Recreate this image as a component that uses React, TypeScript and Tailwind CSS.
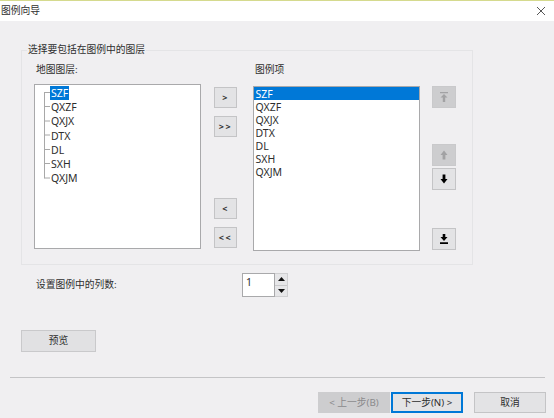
const layers = ['SZF', 'QXZF', 'QXJX', 'DTX', 'DL', 'SXH', 'QXJM']

const FONT = 'font-["Noto_Sans","Noto_Sans_CJK_SC",sans-serif]'

function MoveButton({ label, className = '' }: { label: string; className?: string }) {
  return (
    <button className={`w-[23px] h-[21px] border border-[#c4c4c6] bg-[#e3e3e5] flex items-center justify-center text-[9px] font-bold tracking-[1.5px] text-[#333] ${className}`}>
      {label}
    </button>
  )
}

function OrderButton({ d, disabled = false, className = '' }: { d: string; disabled?: boolean; className?: string }) {
  return (
    <button className={`w-[24px] h-[22px] border flex items-center justify-center ${disabled ? 'bg-[#cdcdcf] border-[#c9c9cb]' : 'bg-[#e3e3e5] border-[#c4c4c6]'} ${className}`}>
      <svg width="8" height="10" viewBox="0 0 8 10" className={disabled ? 'text-[#a2a2a4]' : 'text-black'}>
        <path d={d} fill="currentColor" />
      </svg>
    </button>
  )
}

function WizardButton({ children, className = '' }: { children: React.ReactNode; className?: string }) {
  return (
    <button className={`w-[72px] h-[21px] border flex items-center justify-center text-[9.75px] ${className}`}>
      {children}
    </button>
  )
}

export default function App() {
  return (
    <div className={`w-[554px] h-[418px] overflow-hidden flex flex-col bg-[#f0eff1] text-[10.5px] leading-[14px] text-[#2e2e2e] ${FONT}`}>
      {/* title bar */}
      <div className="h-[21px] shrink-0 bg-white border-t border-[#d5da8e] flex items-center justify-between pl-[1px] pr-[8px]">
        <span className="text-[9.75px]">图例向导</span>
        <svg width="10" height="10" viewBox="0 0 10 10" className="text-[#444]">
          <path d="M1 1l8 8M9 1l-8 8" stroke="currentColor" strokeWidth="0.9" fill="none" />
        </svg>
      </div>

      {/* layer group */}
      <div className="relative ml-[21px] mt-[29px] w-[452px] h-[215px] shrink-0 border border-[#e4e4e6] flex pl-[12px]">
        <span className="absolute left-[5px] top-[-8px] bg-[#f0eff1] px-[1px] text-[9.75px]">选择要包括在图例中的图层</span>

        <div className="w-[167px] flex flex-col pt-[12px]">
          <span className="h-[14px] pl-[2px] text-[9.75px]">地图图层:</span>
          <div className="relative mt-[7px] h-[165px] bg-white border border-[#a9a9ab] pl-[15px] pt-[1px]">
            <svg width="8" height="90" className="absolute left-[9px] top-[7px] text-[#a8a8a8]">
              <path d="M0.5 0V86.5M0.5 0.5H6M0.5 14.5H6M0.5 29H6M0.5 43H6M0.5 57.5H6M0.5 71.5H6M0.5 86H6" stroke="currentColor" fill="none" />
            </svg>
            {layers.map((name, i) => (
              <div key={name} className="h-[14.2px] flex items-center">
                <span className={`px-[1px] ${i === 0 ? 'bg-[#0078d7] text-white' : ''}`}>{name}</span>
              </div>
            ))}
          </div>
        </div>

        <div className="ml-[13px] w-[23px] flex flex-col pt-[36px]">
          <MoveButton label=">" />
          <MoveButton label=">>" className="mt-[8px]" />
          <MoveButton label="<" className="mt-[61px]" />
          <MoveButton label="<<" className="mt-[8px]" />
        </div>

        <div className="ml-[16px] w-[167px] flex flex-col pt-[12px]">
          <span className="h-[14px] pl-[2px] text-[9.75px]">图例项</span>
          <div className="mt-[9px] h-[165px] bg-white border border-[#a9a9ab]">
            {layers.map((name, i) => (
              <div key={name} className={`h-[13.1px] flex items-center pl-[1.5px] ${i === 0 ? 'bg-[#0078d7] text-white' : ''}`}>
                {name}
              </div>
            ))}
          </div>
        </div>

        <div className="ml-[12px] w-[24px] flex flex-col pt-[35px]">
          <OrderButton disabled d="M0 0h8v1.2H0zM4 2L7.5 5.5H5.2V10H2.8V5.5H0.5z" />
          <OrderButton disabled className="mt-[36px]" d="M4 0.5L7.5 5H5.4V9.5H2.6V5H0.5z" />
          <OrderButton className="mt-[2px]" d="M2.6 0.5H5.4V5H7.5L4 9.5L0.5 5H2.6z" />
          <OrderButton className="mt-[38px]" d="M2.7 0H5.3V3H7.5L4 7L0.5 3H2.7zM0 8.3h8V10H0z" />
        </div>
      </div>

      {/* columns */}
      <div className="mt-[8px] h-[24px] shrink-0 flex pl-[36px]">
        <span className="w-[206px] pt-[5px] text-[9.75px]">设置图例中的列数:</span>
        <div className="w-[33px] h-[24px] bg-white border border-[#a9a9ab] pl-[3px] pt-[1px]">1</div>
        <div className="w-[13px] h-[24px] flex flex-col border border-l-0 border-[#cfcfd1] bg-[#d9d9db]">
          <div className="flex-1 flex items-center justify-center bg-[#e6e6e8] border-b border-[#c9c9cb]">
            <svg width="7" height="4" viewBox="0 0 7 4"><path d="M3.5 0L7 4H0z" fill="#111" /></svg>
          </div>
          <div className="flex-1 flex items-center justify-center bg-[#e6e6e8]">
            <svg width="7" height="4" viewBox="0 0 7 4"><path d="M0 0H7L3.5 4z" fill="#111" /></svg>
          </div>
        </div>
      </div>

      <button className="ml-[21px] mt-[33px] w-[75px] h-[22px] shrink-0 border border-[#c9c9cb] bg-[#e1e1e3] flex items-center justify-center text-[9.75px]">
        预览
      </button>

      <div className="ml-[10px] mt-[25px] w-[535px] h-[1px] shrink-0 bg-[#c4c4c6]" />

      {/* wizard buttons */}
      <div className="mt-[14px] flex pl-[318px]">
        <WizardButton className="bg-[#cdcdcf] border-[#cdcdcf] text-[#8a8a8c]">&lt; 上一步(B)</WizardButton>
        <WizardButton className="ml-[1px] bg-[#e3e3e5] border-2 border-[#0078d7]">下一步(N) &gt;</WizardButton>
        <WizardButton className="ml-[11px] bg-[#e3e3e5] border-[#c4c4c6]">取消</WizardButton>
      </div>
    </div>
  )
}
